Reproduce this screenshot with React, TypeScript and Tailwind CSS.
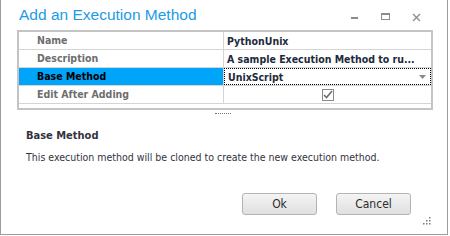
import React from 'react'

const gridFont = { fontFamily: '"DejaVu Sans Condensed", "Liberation Sans", sans-serif' }

function Row({ label, value, selected, children }: { label: string; value?: string; selected?: boolean; children?: React.ReactNode }) {
    return (
        <div className="flex h-[18px] border-b border-[#d4d4d4]">
            <div className={`w-[205px] shrink-0 border-r border-[#d4d4d4] pl-[18px] text-[10.5px] font-bold leading-[17px] ${selected ? 'bg-[#00a4f8] text-black' : 'text-[#6e6e6e]'}`}>
                {label}
            </div>
            <div className={`flex min-w-0 flex-1 items-center ${selected ? 'border border-dotted border-black' : ''}`}>
                {value !== undefined && (
                    <span className={`whitespace-nowrap pl-[3px] text-[10.5px] font-bold leading-[16px] text-[#1d2a3c] ${selected ? 'pl-[2px]' : ''}`}>{value}</span>
                )}
                {children}
            </div>
        </div>
    )
}

export default function App() {
    return (
        <div className="h-[236px] w-[450px] bg-white">
            <div className="relative flex h-[235px] w-[448px] flex-col border-x border-b border-[#9c9c9c] bg-white">
                {/* ── Title bar ── */}
                <div className="flex h-[30px] items-start">
                    <h1 className="pl-[18px] pt-[5px] text-[15.5px] leading-[20px] text-[#1c9be6]" style={{ fontFamily: '"Liberation Sans", sans-serif' }}>
                        Add an Execution Method
                    </h1>
                    <div className="ml-auto flex items-start pr-[26px] pt-[13px]">
                        <div className="mt-[4px] h-[2px] w-[7px] bg-[#8c8c8c]" />
                        <div className="ml-[23px] h-[7px] w-[9px] border border-t-2 border-[#8c8c8c]" />
                        <svg className="ml-[22px]" width="9" height="9" viewBox="0 0 9 9">
                            <path d="M1 1 L8 8 M8 1 L1 8" stroke="#8c8c8c" strokeWidth="1.3" />
                        </svg>
                    </div>
                </div>

                {/* ── Property grid ── */}
                <div className="ml-[16px] w-[416px] border-2 border-[#c4c4c4]" style={gridFont}>
                    <Row label="Name" value="PythonUnix" />
                    <Row label="Description" value="A sample Execution Method to ru..." />
                    <Row label="Base Method" value="UnixScript" selected>
                        <svg className="ml-auto mr-[4px] shrink-0" width="7" height="4" viewBox="0 0 7 4">
                            <path d="M0 0 H7 L3.5 4 Z" fill="#8a8a8a" />
                        </svg>
                    </Row>
                    <Row label="Edit After Adding">
                        <div className="flex w-full justify-center">
                            <div className="flex h-[12px] w-[12px] items-center justify-center border border-[#8a8a8a] bg-white">
                                <svg width="10" height="9" viewBox="0 0 10 9">
                                    <path d="M1 5 L3.5 7.5 L9 1" stroke="#6e6e6e" strokeWidth="1.6" fill="none" />
                                </svg>
                            </div>
                        </div>
                    </Row>
                    <div className="h-[4px]" />
                </div>

                {/* ── Splitter ── */}
                <div className="mt-[3px] flex justify-center pr-[2px]">
                    <div className="w-[16px] border-t border-dotted border-[#707070]" />
                </div>

                {/* ── Help text ── */}
                <div className="pl-[25px] pt-[15px] text-[#333340]" style={gridFont}>
                    <p className="text-[11px] font-bold leading-[14px]">Base Method</p>
                    <p className="mt-[7px] text-[10.5px] leading-[14px]">This execution method will be cloned to create the new execution method.</p>
                </div>

                {/* ── Buttons ── */}
                <div className="mt-auto flex gap-[19px] pb-[19px] pl-[241px]">
                    {['Ok', 'Cancel'].map(b => (
                        <button key={b} className="h-[22px] w-[75px] rounded-[3px] border border-[#b4b4b4] bg-linear-to-b from-[#f4f4f4] to-[#e0e0e0] text-[12px] text-[#2b2b2b]" style={{ fontFamily: '"DejaVu Sans Condensed", "Liberation Sans", sans-serif' }}>
                            {b}
                        </button>
                    ))}
                </div>

                {/* resize grip */}
                <svg className="absolute bottom-[8px] right-[15px]" width="10" height="10" viewBox="0 0 10 10">
                    {[[7, 1], [7, 4], [4, 4], [7, 7], [4, 7], [1, 7]].map(([x, y], i) => (
                        <rect key={i} x={x} y={y} width="1.5" height="1.5" fill="#7a7a7a" />
                    ))}
                </svg>
            </div>
        </div>
    )
}
